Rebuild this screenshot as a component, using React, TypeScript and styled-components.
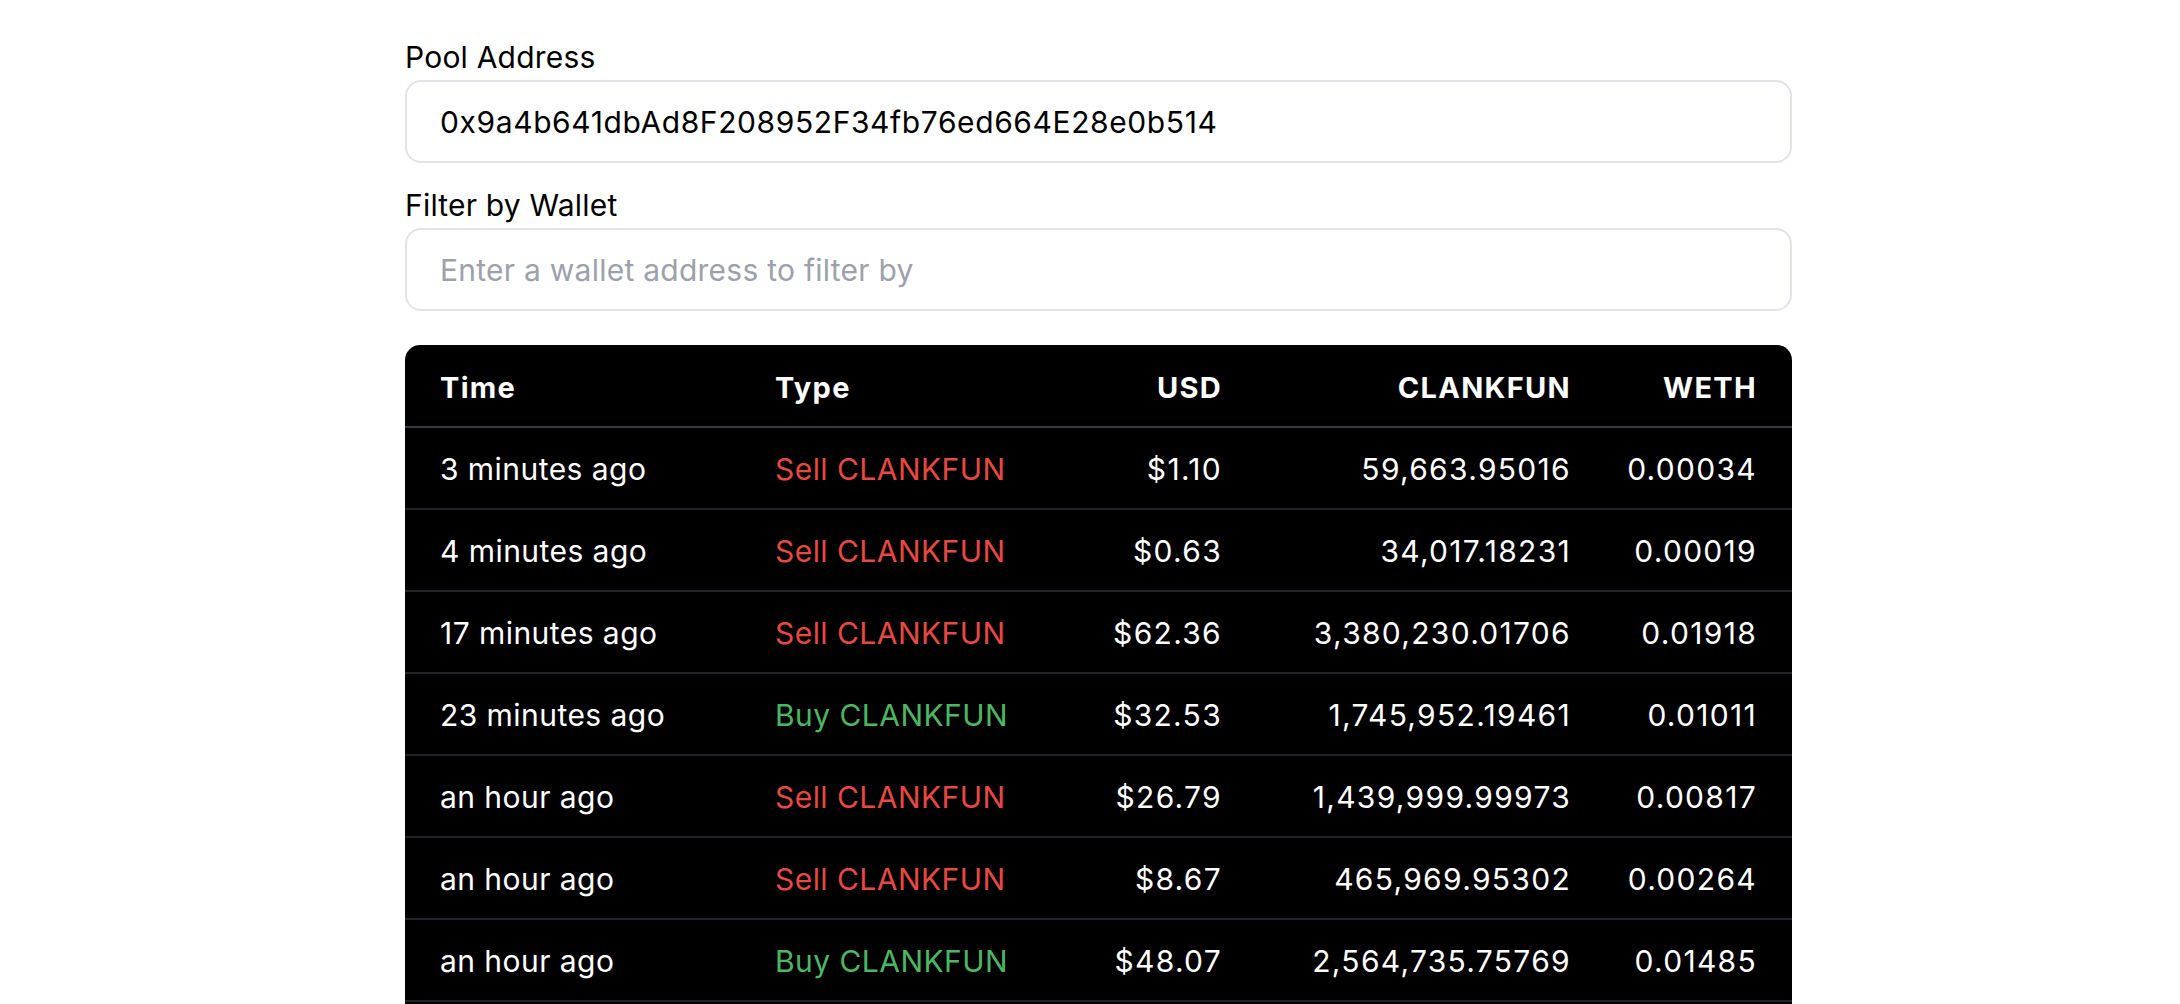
import React from "react";
import styled, { createGlobalStyle } from "styled-components";

const GlobalStyle = createGlobalStyle`
  html, body {
    margin: 0;
    padding: 0;
    background: #ffffff;
  }
  body {
    font-family: Inter, "Noto Sans", "Liberation Sans", sans-serif;
    color: #000000;
    -webkit-font-smoothing: antialiased;
  }
  * { box-sizing: border-box; }
`;

const Page = styled.div`
  display: flex;
  justify-content: center;
  padding: 36px 0 40px 17px;
`;

const Main = styled.main`
  width: 1387px;
  display: flex;
  flex-direction: column;
`;

const Fields = styled.div`
  display: flex;
  flex-direction: column;
  gap: 21px;
  margin-bottom: 34px;
`;

const Field = styled.div`
  display: flex;
  flex-direction: column;
  gap: 2px;
`;

const Label = styled.label`
  font-size: 30px;
  line-height: 42px;
  letter-spacing: 0.2px;
  font-weight: 400;
  color: #000000;
`;

const Input = styled.input`
  height: 83px;
  width: 100%;
  border: 2px solid #e3e4e9;
  border-radius: 16px;
  padding: 0 34px 0 33px;
  font-family: inherit;
  font-size: 30px;
  letter-spacing: 0.6px;
  color: #000000;
  background: #ffffff;
  outline: none;
  &::placeholder {
    color: #9ca1ad;
    letter-spacing: 0.25px;
  }
`;

const TableWrap = styled.div`
  background: #000000;
  border-radius: 15px;
  overflow: hidden;
`;

const Table = styled.table`
  width: 100%;
  border-collapse: collapse;
  table-layout: fixed;
  color: #ffffff;
`;

const HeadCell = styled.th<{ $align?: "left" | "right" }>`
  height: 82px;
  padding: 3px 35px 0 ${(p) => (p.$align === "right" ? "10px" : "35px")};
  text-align: ${(p) => p.$align ?? "left"};
  font-size: 29px;
  letter-spacing: 1.3px;
  font-weight: 700;
  border-bottom: 2px solid #333b47;
  vertical-align: middle;
  white-space: nowrap;
`;

const Row = styled.tr`
  border-bottom: 2px solid #20252d;
`;

const Cell = styled.td<{
  $align?: "left" | "right";
  $tone?: "buy" | "sell";
  $numeric?: boolean;
}>`
  height: 82px;
  padding: 2px 35px 0 ${(p) => (p.$align === "right" ? "10px" : "35px")};
  text-align: ${(p) => p.$align ?? "left"};
  font-size: 30px;
  letter-spacing: ${(p) => (p.$numeric ? "1.3px" : "0.45px")};
  font-weight: 400;
  vertical-align: middle;
  white-space: nowrap;
  color: ${(p) =>
    p.$tone === "buy" ? "#4ab862" : p.$tone === "sell" ? "#e84840" : "#ffffff"};
`;

type Trade = {
  time: string;
  side: "Buy" | "Sell";
  usd: string;
  clank: string;
  weth: string;
};

const trades: Trade[] = [
  { time: "3 minutes ago", side: "Sell", usd: "$1.10", clank: "59,663.95016", weth: "0.00034" },
  { time: "4 minutes ago", side: "Sell", usd: "$0.63", clank: "34,017.18231", weth: "0.00019" },
  { time: "17 minutes ago", side: "Sell", usd: "$62.36", clank: "3,380,230.01706", weth: "0.01918" },
  { time: "23 minutes ago", side: "Buy", usd: "$32.53", clank: "1,745,952.19461", weth: "0.01011" },
  { time: "an hour ago", side: "Sell", usd: "$26.79", clank: "1,439,999.99973", weth: "0.00817" },
  { time: "an hour ago", side: "Sell", usd: "$8.67", clank: "465,969.95302", weth: "0.00264" },
  { time: "an hour ago", side: "Buy", usd: "$48.07", clank: "2,564,735.75769", weth: "0.01485" },
  { time: "an hour ago", side: "Sell", usd: "$12.41", clank: "669,210.44817", weth: "0.00378" },
  { time: "2 hours ago", side: "Buy", usd: "$20.05", clank: "1,081,442.30126", weth: "0.00611" },
];

export default function App() {
  return (
    <>
      <GlobalStyle />
      <Page>
        <Main>
          <Fields>
            <Field>
              <Label htmlFor="pool">Pool Address</Label>
              <Input
                id="pool"
                defaultValue="0x9a4b641dbAd8F208952F34fb76ed664E28e0b514"
              />
            </Field>
            <Field>
              <Label htmlFor="wallet">Filter by Wallet</Label>
              <Input id="wallet" placeholder="Enter a wallet address to filter by" />
            </Field>
          </Fields>
          <TableWrap>
            <Table>
              <colgroup>
                <col style={{ width: "335px" }} />
                <col style={{ width: "290px" }} />
                <col style={{ width: "227px" }} />
                <col style={{ width: "349px" }} />
                <col style={{ width: "186px" }} />
              </colgroup>
              <thead>
                <tr>
                  <HeadCell>Time</HeadCell>
                  <HeadCell>Type</HeadCell>
                  <HeadCell $align="right">USD</HeadCell>
                  <HeadCell $align="right">CLANKFUN</HeadCell>
                  <HeadCell $align="right">WETH</HeadCell>
                </tr>
              </thead>
              <tbody>
                {trades.map((t, i) => (
                  <Row key={i}>
                    <Cell>{t.time}</Cell>
                    <Cell $tone={t.side === "Buy" ? "buy" : "sell"}>
                      {t.side} CLANKFUN
                    </Cell>
                    <Cell $align="right" $numeric>{t.usd}</Cell>
                    <Cell $align="right" $numeric>{t.clank}</Cell>
                    <Cell $align="right" $numeric>{t.weth}</Cell>
                  </Row>
                ))}
              </tbody>
            </Table>
          </TableWrap>
        </Main>
      </Page>
    </>
  );
}
